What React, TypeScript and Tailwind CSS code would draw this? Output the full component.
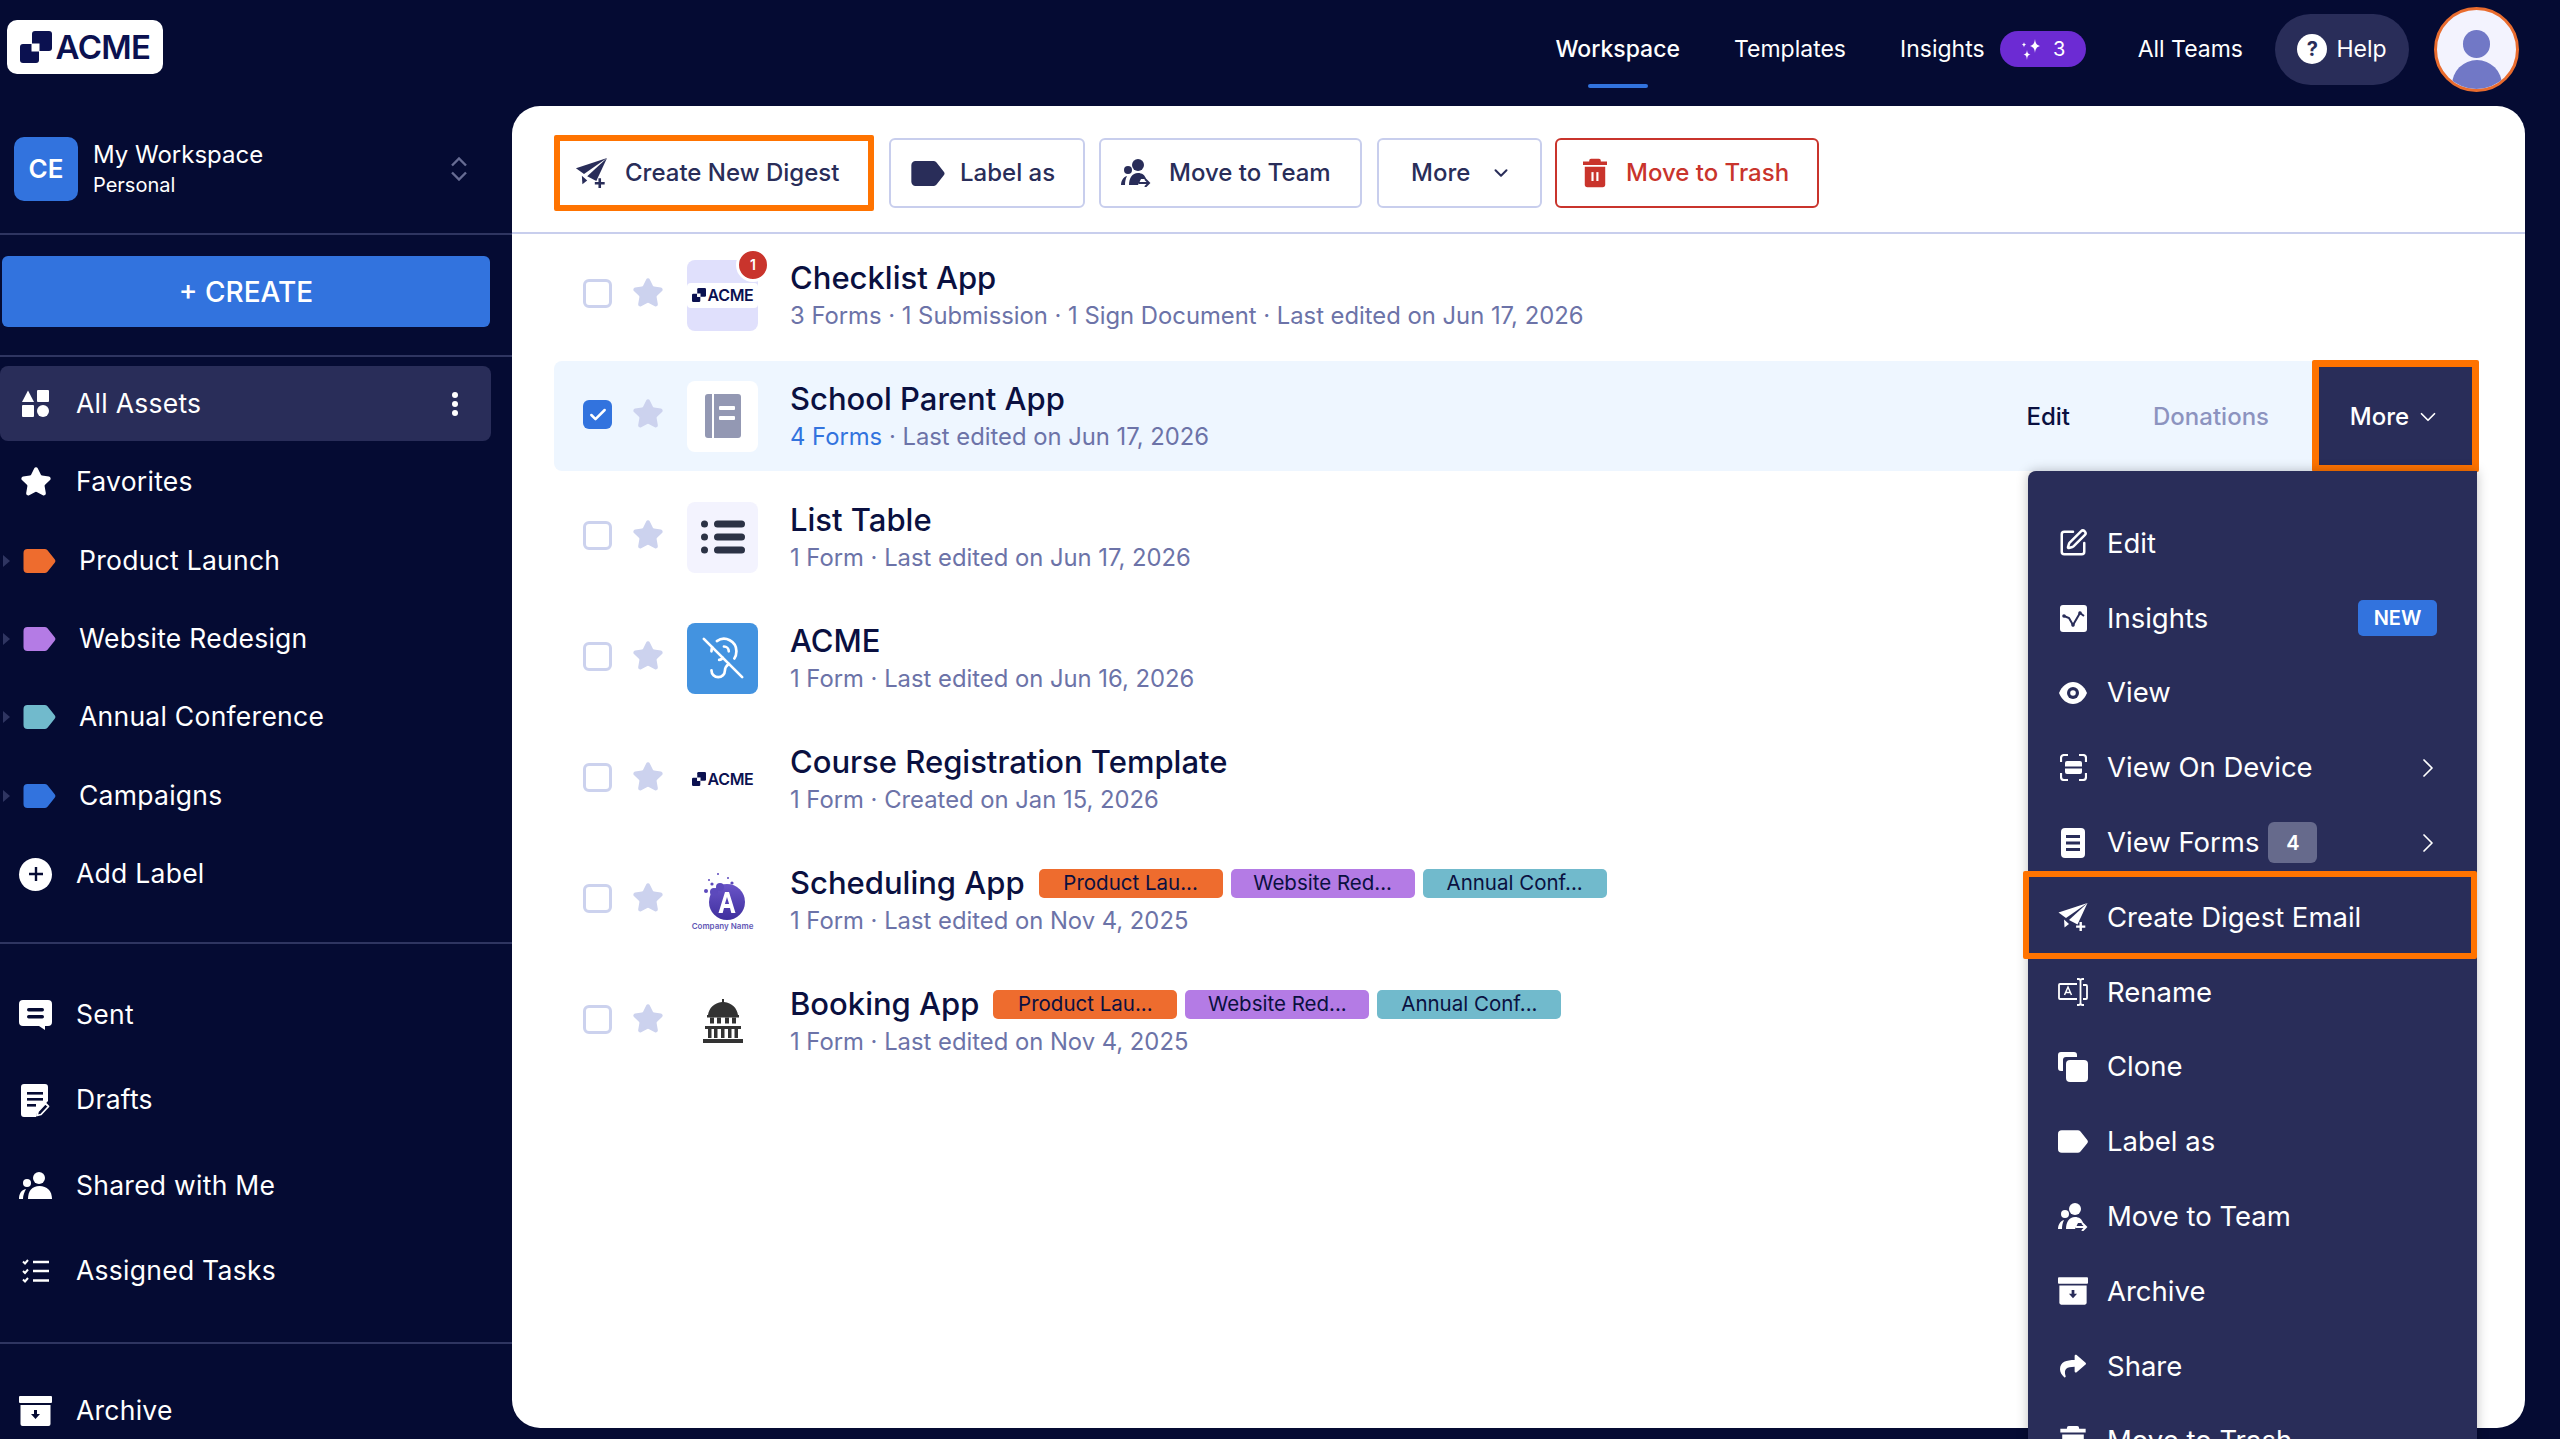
import React from "react";
import { Star, ChevronDown, ChevronRight, EarOff, SquarePen, Check } from "lucide-react";
import { FaShare } from "react-icons/fa";

const NAVY = "#050B33";
const PANEL = "#292D59";

type IconProps = { className?: string; cut?: string };

function LogoMark({ className = "", cut = "#fff" }: IconProps) {
  return (
    <svg viewBox="0 0 32 32" className={className}>
      <rect x="12" y="0" width="20" height="20" rx="3" fill="#0B1150" />
      <rect x="0" y="13" width="19" height="19" rx="3" fill="#0B1150" />
      <rect x="11.5" y="12.5" width="8" height="8" fill={cut} />
    </svg>
  );
}

function AcmeLogo({ size, mark, gap }: { size: string; mark: string; gap: string }) {
  return (
    <div className={`flex items-center ${gap}`}>
      <LogoMark className={mark} />
      <span className={`${size} font-semibold text-[#0B1150] tracking-[-0.02em] leading-none`}>ACME</span>
    </div>
  );
}

function Plane({ className = "" }: IconProps) {
  return (
    <svg viewBox="0 0 30 28" fill="currentColor" className={className}>
      <path d="M29.500 0 0.500 9.500 8 15Z" />
      <path d="M29.500 0 11 17 19.500 21.500 Z" />
      <path d="M6 16.500 11 21 6.500 24.500Z" />
      <path d="M21.500 19h2.400v3.400h3.400v2.400h-3.400v3.200h-2.400v-3.200h-3.400v-2.400h3.400Z" />
    </svg>
  );
}

function Tag({ className = "" }: IconProps) {
  return (
    <svg viewBox="0 0 32 24" fill="currentColor" className={className}>
      <path d="M4 0H21a4 4 0 0 1 3 1.3L31 10a3 3 0 0 1 0 4L24 22.7a4 4 0 0 1-3 1.3H4a4 4 0 0 1-4-4V4a4 4 0 0 1 4-4Z" />
    </svg>
  );
}

function Assets({ className = "" }: IconProps) {
  return (
    <svg viewBox="0 0 27 27" fill="currentColor" className={className}>
      <path d="M6 0.5 12 12H0Z" />
      <rect x="15" y="0" width="12" height="12" rx="1" />
      <rect x="0" y="15" width="12" height="12" rx="1" />
      <circle cx="21" cy="21" r="6" />
    </svg>
  );
}

function Sent({ className = "" }: IconProps) {
  return (
    <svg viewBox="0 0 33 30" fill="currentColor" className={className}>
      <path d="M4 0h25a4 4 0 0 1 4 4v18a4 4 0 0 1-4 4h-3v4l-6-4H4a4 4 0 0 1-4-4V4a4 4 0 0 1 4-4Z" />
      <rect x="8" y="8" width="17" height="3.4" rx="1.7" fill={NAVY} />
      <rect x="8" y="15" width="17" height="3.4" rx="1.7" fill={NAVY} />
    </svg>
  );
}

function Drafts({ className = "" }: IconProps) {
  return (
    <svg viewBox="0 0 29 33" fill="currentColor" className={className}>
      <path d="M3 0h21a3 3 0 0 1 3 3v14l-11 12-1 4H3a3 3 0 0 1-3-3V3a3 3 0 0 1 3-3Z" />
      <rect x="6" y="8" width="16" height="2.6" fill={NAVY} />
      <rect x="6" y="14" width="16" height="2.6" fill={NAVY} />
      <rect x="6" y="20" width="9" height="2.6" fill={NAVY} />
      <path d="M24.5 19.5l3 3-7.5 8-4 1 1-4Z" fill="none" stroke="currentColor" strokeWidth="1.8" strokeLinejoin="round" />
    </svg>
  );
}

function People({ className = "" }: IconProps) {
  return (
    <svg viewBox="0 0 33 27" fill="currentColor" className={className}>
      <circle cx="20" cy="6" r="6" />
      <circle cx="8" cy="11" r="4" />
      <path d="M9 27c0-8 4-13 11.500-13S33 19 33 27Z" />
      <path d="M0 27c0-5 2-9 7-10-1.500 3-3 6-3 10Z" />
    </svg>
  );
}

function MoveTeam({ className = "" }: IconProps) {
  return (
    <svg viewBox="0 0 30 28" fill="currentColor" className={className}>
      <circle cx="17" cy="6" r="6" />
      <circle cx="7" cy="11" r="4" />
      <path d="M8 26c0-7 3-12 9-12 4 0 7 2 8 6h-5l-3 6Z" />
      <path d="M0 26c0-4 2-8 6-9-1.500 3-2 6-2 9Z" />
      <path d="M18 24h9M24 20l4 4-4 4" fill="none" stroke="currentColor" strokeWidth="2" />
    </svg>
  );
}

function Tasks({ className = "" }: IconProps) {
  return (
    <svg viewBox="0 0 27 24" className={className} fill="none" stroke="currentColor">
      <path d="M1 2.500 3 4.500 6 1M1 12 3 14 6 10.500M1 20.500 3 22.500 6 19" strokeWidth="2" />
      <path d="M11 3h16M11 12h16M11 21.500h16" strokeWidth="2.400" />
    </svg>
  );
}

function ArchiveBox({ className = "", cut = NAVY }: IconProps) {
  return (
    <svg viewBox="0 0 33 30" fill="currentColor" className={className}>
      <rect x="0" y="0" width="33" height="7" rx="1" />
      <path d="M1.500 9h30v19a2 2 0 0 1-2 2h-26a2 2 0 0 1-2-2Z" />
      <path d="M15 14h3v4h3l-4.500 5L12 18h3Z" fill={cut} />
    </svg>
  );
}

function Insight({ className = "", cut = PANEL }: IconProps) {
  return (
    <svg viewBox="0 0 27 27" fill="currentColor" className={className}>
      <rect width="27" height="27" rx="3" />
      <path d="M4 11 9 13 13 20 20 8 24 11" fill="none" stroke={cut} strokeWidth="2" />
      <circle cx="4" cy="11" r="1.800" fill={cut} />
      <circle cx="13" cy="20" r="1.800" fill={cut} />
      <circle cx="20" cy="8" r="1.800" fill={cut} />
    </svg>
  );
}

function Eye({ className = "", cut = PANEL }: IconProps) {
  return (
    <svg viewBox="0 0 28 22" fill="currentColor" className={className}>
      <path d="M14 0c6 0 11 4 14 11-3 7-8 11-14 11S3 18 0 11C3 4 8 0 14 0Z" />
      <circle cx="14" cy="11" r="6" fill={cut} />
      <circle cx="14" cy="11" r="2.800" />
    </svg>
  );
}

function Device({ className = "" }: IconProps) {
  return (
    <svg viewBox="0 0 27 27" fill="none" stroke="currentColor" strokeWidth="2.200" className={className}>
      <path d="M1 8V4a3 3 0 0 1 3-3h4M19 1h4a3 3 0 0 1 3 3v4M26 19v4a3 3 0 0 1-3 3h-4M8 26H4a3 3 0 0 1-3-3v-4" />
      <rect x="5" y="7" width="17" height="13" rx="2" fill="currentColor" stroke="none" />
      <rect x="0" y="12.500" width="27" height="2" fill={PANEL} stroke="none" />
    </svg>
  );
}

function FormDoc({ className = "" }: IconProps) {
  return (
    <svg viewBox="0 0 24 30" fill="currentColor" className={className}>
      <rect width="24" height="30" rx="4" />
      <rect x="5" y="7" width="14" height="3" fill={PANEL} />
      <rect x="5" y="13.500" width="14" height="3" fill={PANEL} />
      <rect x="5" y="20" width="14" height="3" fill={PANEL} />
    </svg>
  );
}

function Rename({ className = "" }: IconProps) {
  return (
    <svg viewBox="0 0 30 28" fill="none" stroke="currentColor" strokeWidth="1.800" className={className}>
      <path d="M19 6H2a1 1 0 0 0-1 1v13a1 1 0 0 0 1 1h17" />
      <path d="M25 7h3a1 1 0 0 1 1 1v12a1 1 0 0 1-1 1h-3M19 1h1.500a2 2 0 0 1 2 2v22a2 2 0 0 1-2 2H19M26 1h-1.500a2 2 0 0 0-2 2v22a2 2 0 0 0 2 2H26" />
      <path d="M6.500 17l3.500-8 3.500 8M8 14.500h4" strokeWidth="1.500" />
    </svg>
  );
}

function Clone({ className = "" }: IconProps) {
  return (
    <svg viewBox="0 0 30 30" fill="currentColor" className={className}>
      <path d="M3 0h13a3 3 0 0 1 3 3v2H8a3 3 0 0 0-3 3v11H3a3 3 0 0 1-3-3V3a3 3 0 0 1 3-3Z" />
      <rect x="8" y="8" width="22" height="22" rx="4" />
    </svg>
  );
}

function Trash({ className = "", cut = "#fff" }: IconProps) {
  return (
    <svg viewBox="0 0 27 32" fill="currentColor" className={className}>
      <path d="M9 0h9a2 2 0 0 1 2 2v1h7v4H0V3h7V2a2 2 0 0 1 2-2Z" />
      <path d="M2 9h23v20a3 3 0 0 1-3 3H5a3 3 0 0 1-3-3Z" />
      <rect x="9.500" y="15" width="2.400" height="10" fill={cut} />
      <rect x="15" y="15" width="2.400" height="10" fill={cut} />
    </svg>
  );
}

function Dome({ className = "" }: IconProps) {
  return (
    <svg viewBox="0 0 40 44" fill="#333" className={className}>
      <path d="M19 0h2v3c8 1 13 6 14 13H5C6 9 11 4 19 3Z" />
      <rect x="4" y="16" width="32" height="2.500" />
      <path d="M7 18.500h4v6H7ZM14 18.500h4v6h-4ZM22 18.500h4v6h-4ZM29 18.500h4v6h-4Z" />
      <rect x="2" y="27" width="36" height="3" />
      <path d="M5 30h3.500v9H5ZM11 30h3.500v9H11ZM18 30h3.500v9H18ZM25 30h3.500v9H25ZM31.500 30H35v9h-3.500Z" />
      <rect x="0" y="40" width="40" height="4" />
    </svg>
  );
}

function CompanyLogo() {
  return (
    <div className="flex flex-col items-center w-[64px]">
      <svg viewBox="0 0 50 50" className="w-[50px] h-[50px]">
        <defs>
          <linearGradient id="co" x1="0" y1="0" x2="0" y2="1">
            <stop offset="0" stopColor="#6A55C8" />
            <stop offset="1" stopColor="#3F2F9E" />
          </linearGradient>
        </defs>
        <circle cx="29" cy="31" r="18" fill="url(#co)" />
        <circle cx="16" cy="21" r="4" fill="#5C49BC" />
        <circle cx="22" cy="16" r="4" fill="#5C49BC" />
        <circle cx="8" cy="20" r="2" fill="#5C49BC" />
        <circle cx="14" cy="13" r="1.600" fill="#5C49BC" />
        <circle cx="34" cy="12" r="1.600" fill="#5C49BC" />
        <circle cx="30" cy="7" r="1" fill="#5C49BC" />
        <circle cx="11" cy="9" r="1" fill="#5C49BC" />
        <circle cx="20" cy="3" r="1" fill="#5C49BC" />
        <path d="M20.500 42 27 21h4l6.500 21h-4.200l-1.300-5h-6l-1.300 5Zm6.400-9h4.200L29 26Z" fill="#fff" />
      </svg>
      <span className="text-[8px] font-semibold text-[#6257B5] leading-none mt-[1px] whitespace-nowrap">Company Name</span>
    </div>
  );
}

function SideRow({ icon, label, h = "h-[78.4px]" }: { icon: React.ReactNode; label: string; h?: string }) {
  return (
    <div className={`flex items-center ${h} pl-[19px]`}>
      <span className="w-[33px] flex justify-center">{icon}</span>
      <span className="ml-[24px] text-[26.500px] tracking-[0.01em]">{label}</span>
    </div>
  );
}

function LabelRow({ color, label }: { color: string; label: string }) {
  return (
    <div className="flex items-center h-[78.4px] pl-[3px]">
      <span className="w-0 h-0 border-y-[6px] border-y-transparent border-l-[7px] border-l-[#2F3561]" />
      <Tag className={`ml-[13px] w-[33px] h-[24px] ${color}`} />
      <span className="ml-[23px] text-[26.500px] tracking-[0.01em]">{label}</span>
    </div>
  );
}

function Sidebar() {
  return (
    <aside className="w-[512px] shrink-0 h-[1333px] text-white">
      <div className="flex items-center h-[129px] pl-[14px] border-b-2 border-[#2F3561] pb-[2px]">
        <div className="w-[64px] h-[64px] rounded-[10px] bg-[#3273DE] flex items-center justify-center text-[26px] font-semibold">CE</div>
        <div className="ml-[15px] leading-none mt-[2px]">
          <div className="text-[24px] leading-[30px]">My Workspace</div>
          <div className="text-[20px] leading-[30px]">Personal</div>
        </div>
        <svg viewBox="0 0 16 24" fill="none" stroke="currentColor" strokeWidth="2.400" className="ml-auto mr-[45px] w-[16px] h-[24px] text-[#676C93]">
          <path d="M1 8.500 8 1.500 15 8.500M1 15.500 8 22.500 15 15.500" />
        </svg>
      </div>
      <div className="h-[122px] border-b-2 border-[#2F3561] pt-[21px] pr-[22px] pl-[2px]">
        <div className="h-[71px] rounded-[6px] bg-[#3273DE] flex items-center justify-center text-[28px] font-medium">+ CREATE</div>
      </div>
      <div className="mt-[9px] mb-[2px] w-[491px] h-[75px] rounded-[8px] bg-[#292D59] flex items-center pl-[22px] pr-[32px]">
        <Assets className="w-[27px] h-[27px]" />
        <span className="ml-[27px] text-[26.500px] tracking-[0.01em]">All Assets</span>
        <svg viewBox="0 0 8 26" className="ml-auto w-[8px] h-[26px]" fill="currentColor">
          <circle cx="4" cy="4" r="3" />
          <circle cx="4" cy="13" r="3" />
          <circle cx="4" cy="22" r="3" />
        </svg>
      </div>
      <SideRow icon={<Star className="w-[32px] h-[32px]" fill="currentColor" />} label="Favorites" />
      <LabelRow color="text-[#EE6C2E]" label="Product Launch" />
      <LabelRow color="text-[#B47BE5]" label="Website Redesign" />
      <LabelRow color="text-[#71BACC]" label="Annual Conference" />
      <LabelRow color="text-[#3273DE]" label="Campaigns" />
      <div className="flex items-center h-[78.4px] pl-[19px]">
        <span className="w-[33px] h-[33px] rounded-full bg-white flex items-center justify-center text-[#050B33]">
          <svg viewBox="0 0 16 16" className="w-[16px] h-[16px]" fill="none" stroke="currentColor" strokeWidth="2.400">
            <path d="M8 1v14M1 8h14" />
          </svg>
        </span>
        <span className="ml-[24px] text-[26.500px] tracking-[0.01em]">Add Label</span>
      </div>
      <div className="mt-[29px] border-b-2 border-[#2F3561]" />
      <div className="pt-[28px] pb-[28px] border-b-2 border-[#2F3561]">
        <SideRow h="h-[85.300px]" icon={<Sent className="w-[33px] h-[30px]" />} label="Sent" />
        <SideRow h="h-[85.300px]" icon={<Drafts className="w-[29px] h-[33px]" />} label="Drafts" />
        <SideRow h="h-[85.300px]" icon={<People className="w-[33px] h-[27px]" />} label="Shared with Me" />
        <SideRow h="h-[85.300px]" icon={<Tasks className="w-[27px] h-[24px]" />} label="Assigned Tasks" />
      </div>
      <div className="pt-[25px]">
        <SideRow h="h-[85px]" icon={<ArchiveBox className="w-[33px] h-[30px]" />} label="Archive" />
      </div>
    </aside>
  );
}

function Header() {
  return (
    <header className="h-[106px] flex items-start text-white">
      <div className="ml-[7px] mt-[20px] w-[156px] h-[54px] rounded-[10px] bg-white flex items-center justify-center">
        <AcmeLogo size="text-[33px]" mark="w-[32px] h-[32px]" gap="gap-[4px]" />
      </div>
      <nav className="ml-auto h-[99px] flex items-center text-[23px] pb-[1px]">
        <div className="relative font-medium">
          Workspace
          <div className="absolute left-[33px] top-[52px] w-[60px] h-[4px] rounded-full bg-[#3273DE]" />
        </div>
        <span className="ml-[54px]">Templates</span>
        <span className="ml-[54px]">Insights</span>
        <span className="ml-[15px] w-[86px] h-[36px] rounded-full bg-[#6C2BD3] flex items-center justify-center gap-[9px] text-[20px]">
          <svg viewBox="0 0 24 24" fill="currentColor" className="w-[24px] h-[24px]">
            <path d="M15 2c.5 4 1.500 6 5 7-3.500 1-4.500 3-5 7-.5-4-1.500-6-5-7 3.500-1 4.500-3 5-7ZM7 13c.4 3 1 4 3.500 4.500C8 18 7.400 19 7 23c-.4-4-1-5-3.500-5.500C6 17 6.600 16 7 13ZM4 5c.2 1.500.7 2.300 2.200 2.700C4.700 8 4.200 8.800 4 10.500 3.800 8.800 3.300 8 1.800 7.700 3.300 7.300 3.800 6.500 4 5Z" />
          </svg>
          3
        </span>
        <span className="ml-[52px]">All Teams</span>
        <div className="ml-[32px] w-[134px] h-[71px] rounded-full bg-[#292D59] flex items-center justify-center gap-[9px]">
          <span className="w-[30px] h-[30px] rounded-full bg-white text-[#292D59] flex items-center justify-center text-[20px] font-bold">?</span>
          Help
        </div>
        <div className="ml-[25px] mr-[41px] w-[85px] h-[85px] rounded-full border-[3px] border-[#E96C2E] bg-[#F3F3FE] overflow-hidden flex flex-col items-center">
          <span className="mt-[20px] w-[27px] h-[28px] shrink-0 rounded-full bg-[#7178C6]" />
          <span className="mt-[2px] w-[50px] h-[60px] shrink-0 rounded-full bg-[#7178C6]" />
        </div>
      </nav>
    </header>
  );
}

const TB = "h-[70px] rounded-[6px] border-2 border-[#C8CEED] flex items-center text-[24px] font-medium text-[#292D59]";

function Toolbar() {
  return (
    <div className="h-[128px] border-b-2 border-[#C8CEED] flex items-center pl-[42px] pt-[8px]">
      <div className="w-[320px] h-[76px] rounded-[2px] border-[6px] border-[#FF7300] flex items-center pl-[15px] text-[24px] font-medium text-[#292D59]">
        <Plane className="w-[33px] h-[30px]" />
        <span className="ml-[17px]">Create New Digest</span>
      </div>
      <div className={`${TB} ml-[15px] w-[196px] pl-[20px]`}>
        <Tag className="w-[34px] h-[25px]" />
        <span className="ml-[15px]">Label as</span>
      </div>
      <div className={`${TB} ml-[14px] w-[263px] pl-[20px]`}>
        <MoveTeam className="w-[30px] h-[28px]" />
        <span className="ml-[18px]">Move to Team</span>
      </div>
      <div className={`${TB} ml-[15px] w-[165px] pl-[32px]`}>
        More
        <ChevronDown className="ml-[20px] w-[22px] h-[22px]" strokeWidth={2.200} />
      </div>
      <div className={`${TB} ml-[13px] w-[264px] pl-[26px] !border-[#C9342C] !text-[#C9342C]`}>
        <Trash className="w-[24px] h-[30px]" />
        <span className="ml-[19px]">Move to Trash</span>
      </div>
    </div>
  );
}

function MenuRow({ icon, label, children }: { icon: React.ReactNode; label: string; children?: React.ReactNode }) {
  return (
    <div className="flex items-center h-[74.800px] pl-[30px] pr-[40px]">
      <span className="w-[30px] flex justify-center">{icon}</span>
      <span className="ml-[19px] text-[27.500px]">{label}</span>
      {children}
    </div>
  );
}

function MenuChevron() {
  return <ChevronRight className="ml-auto -mr-[7px] w-[32px] h-[32px]" strokeWidth={1.300} />;
}

function Menu() {
  return (
    <div className="absolute z-10 right-[-2px] top-full w-[449px] h-[1000px] rounded-tl-[8px] bg-[#292D59] text-white pt-[35px] shadow-[0_0_12px_rgba(0,0,0,0.25)]">
      <MenuRow icon={<SquarePen className="w-[30px] h-[30px]" strokeWidth={2} />} label="Edit" />
      <MenuRow icon={<Insight className="w-[27px] h-[27px]" />} label="Insights">
        <span className="ml-auto w-[79px] h-[36px] rounded-[5px] bg-[#3273DE] flex items-center justify-center text-[20px] font-semibold">NEW</span>
      </MenuRow>
      <MenuRow icon={<Eye className="w-[28px] h-[22px]" />} label="View" />
      <MenuRow icon={<Device className="w-[27px] h-[27px]" />} label="View On Device">
        <MenuChevron />
      </MenuRow>
      <MenuRow icon={<FormDoc className="w-[24px] h-[30px]" />} label="View Forms">
        <span className="ml-[9px] w-[49px] h-[41px] rounded-[6px] bg-[#666A8C] flex items-center justify-center text-[20px] font-semibold">4</span>
        <MenuChevron />
      </MenuRow>
      <div className="relative">
        <MenuRow icon={<Plane className="w-[30px] h-[28px]" />} label="Create Digest Email" />
        <div className="absolute -top-[9px] -bottom-[4px] -left-[5px] right-0 rounded-[2px] border-[6px] border-[#FF7300]" />
      </div>
      <MenuRow icon={<Rename className="w-[30px] h-[28px]" />} label="Rename" />
      <MenuRow icon={<Clone className="w-[30px] h-[30px]" />} label="Clone" />
      <MenuRow icon={<Tag className="w-[30px] h-[23px]" />} label="Label as" />
      <MenuRow icon={<MoveTeam className="w-[30px] h-[28px]" />} label="Move to Team" />
      <MenuRow icon={<ArchiveBox className="w-[30px] h-[28px]" cut={PANEL} />} label="Archive" />
      <MenuRow icon={<FaShare className="w-[30px] h-[26px]" />} label="Share" />
      <MenuRow icon={<Trash className="w-[26px] h-[30px]" cut={PANEL} />} label="Move to Trash" />
    </div>
  );
}

function TagChip({ color, label }: { color: string; label: string }) {
  return (
    <span className={`w-[184px] h-[29px] rounded-[5px] ${color} flex items-center justify-center whitespace-nowrap text-[20.500px] text-[#0A1040]`}>{label}</span>
  );
}

type RowData = {
  title: string;
  sub: React.ReactNode;
  tile: React.ReactNode;
  tags?: boolean;
  selected?: boolean;
};

const rows: RowData[] = [
  {
    title: "Checklist App",
    sub: "3 Forms · 1 Submission · 1 Sign Document · Last edited on Jun 17, 2026",
    tile: (
      <div className="relative w-full h-full rounded-[8px] bg-[#E0E0FC] flex items-center">
        <div className="w-full h-[25px] bg-white rounded-[4px] flex items-center justify-center">
          <AcmeLogo size="text-[16px]" mark="w-[14px] h-[14px]" gap="gap-[2px]" />
        </div>
        <span className="absolute left-[49px] top-[-12px] w-[34px] h-[34px] rounded-full bg-[#C9342C] border-[3px] border-white text-white flex items-center justify-center text-[14px] font-semibold">1</span>
      </div>
    ),
  },
  {
    title: "School Parent App",
    selected: true,
    sub: (
      <>
        <span className="text-[#3273DE]">4 Forms</span> · Last edited on Jun 17, 2026
      </>
    ),
    tile: (
      <div className="w-full h-full rounded-[8px] bg-white flex items-center justify-center">
        <svg viewBox="0 0 36 44" className="w-[36px] h-[44px]" fill="#9398B3">
          <path d="M3 0h4v44H3a3 3 0 0 1-3-3V3a3 3 0 0 1 3-3Z" />
          <path d="M9 0h24a3 3 0 0 1 3 3v38a3 3 0 0 1-3 3H9Z" />
          <rect x="14" y="12" width="16" height="4" fill="#fff" rx="1" />
          <rect x="14" y="22" width="16" height="4" fill="#fff" rx="1" />
        </svg>
      </div>
    ),
  },
  {
    title: "List Table",
    sub: "1 Form · Last edited on Jun 17, 2026",
    tile: (
      <div className="w-full h-full rounded-[8px] bg-[#F3F3FE] flex items-center justify-center">
        <svg viewBox="0 0 44 36" className="w-[44px] h-[36px]" fill="#2B3245">
          <circle cx="3.500" cy="5" r="3.500" />
          <circle cx="3.500" cy="18" r="3.500" />
          <circle cx="3.500" cy="31" r="3.500" />
          <rect x="13" y="1.500" width="31" height="7" rx="3.500" />
          <rect x="13" y="14.500" width="31" height="7" rx="3.500" />
          <rect x="13" y="27.500" width="31" height="7" rx="3.500" />
        </svg>
      </div>
    ),
  },
  {
    title: "ACME",
    sub: "1 Form · Last edited on Jun 16, 2026",
    tile: (
      <div className="w-full h-full rounded-[8px] bg-[#4393E0] flex items-center justify-center text-white">
        <EarOff className="w-[46px] h-[46px]" strokeWidth={1.400} />
      </div>
    ),
  },
  {
    title: "Course Registration Template",
    sub: "1 Form · Created on Jan 15, 2026",
    tile: (
      <div className="w-full h-full flex items-center justify-center">
        <AcmeLogo size="text-[16px]" mark="w-[14px] h-[14px]" gap="gap-[2px]" />
      </div>
    ),
  },
  {
    title: "Scheduling App",
    tags: true,
    sub: "1 Form · Last edited on Nov 4, 2025",
    tile: (
      <div className="w-full h-full flex items-center justify-center">
        <CompanyLogo />
      </div>
    ),
  },
  {
    title: "Booking App",
    tags: true,
    sub: "1 Form · Last edited on Nov 4, 2025",
    tile: (
      <div className="w-full h-full flex items-center justify-center">
        <Dome className="w-[40px] h-[44px]" />
      </div>
    ),
  },
];

function Row({ row }: { row: RowData }) {
  return (
    <div className={`relative h-[110px] rounded-[8px] flex items-center pl-[29px] ${row.selected ? "bg-[#EEF6FF]" : ""}`}>
      {row.selected ? (
        <span className="-mt-[3px] w-[29px] h-[29px] rounded-[6px] bg-[#3273DE] flex items-center justify-center text-white">
          <Check className="w-[20px] h-[20px]" strokeWidth={3} />
        </span>
      ) : (
        <span className="-mt-[3px] w-[29px] h-[29px] rounded-[6px] border-[3px] border-[#CCD2EE] bg-white" />
      )}
      <Star className="-mt-[5px] ml-[20px] w-[32px] h-[32px] text-[#CCD2EE]" fill="currentColor" />
      <div className="ml-[23px] w-[71px] h-[71px] shrink-0">{row.tile}</div>
      <div className="ml-[32px] -mt-[2px]">
        <div className="flex items-center h-[44px]">
          <span className="text-[31px] font-medium text-[#0A1040]">{row.title}</span>
          {row.tags && (
            <div className="ml-[14px] flex gap-[8px]">
              <TagChip color="bg-[#EE6C2E]" label="Product Lau..." />
              <TagChip color="bg-[#B47BE5]" label="Website Red..." />
              <TagChip color="bg-[#71BACC]" label="Annual Conf..." />
            </div>
          )}
        </div>
        <div className="text-[23.800px] leading-[32px] text-[#6C73A8]">{row.sub}</div>
      </div>
      {row.selected && (
        <div className="ml-auto flex items-center">
          <span className="mt-[2px] text-[24px] font-medium text-[#0A1040]">Edit</span>
          <span className="mt-[2px] ml-[83px] text-[24px] font-medium text-[#8C93BF]">Donations</span>
          <div className="ml-[43px] -mr-[4px] pt-[2px] w-[167px] h-[112px] rounded-[2px] border-[7px] border-[#FF7300] bg-[#292D59] text-white flex items-center justify-center gap-[6px] text-[24px] font-medium">
            More
            <ChevronDown className="w-[26px] h-[26px]" strokeWidth={1.600} />
          </div>
          <Menu />
        </div>
      )}
    </div>
  );
}

export default function App() {
  return (
    <div className="w-[2560px] h-[1439px] overflow-hidden bg-[#050B33] [font-family:Inter,'Noto_Sans',sans-serif]">
      <Header />
      <div className="flex items-start">
        <Sidebar />
        <main className="w-[2013px] h-[1322px] rounded-[28px] bg-white">
          <Toolbar />
          <div className="ml-[42px] mr-[50px] pt-[6px] flex flex-col gap-[11px]">
            {rows.map((r) => (
              <Row key={r.title} row={r} />
            ))}
          </div>
        </main>
      </div>
    </div>
  );
}
